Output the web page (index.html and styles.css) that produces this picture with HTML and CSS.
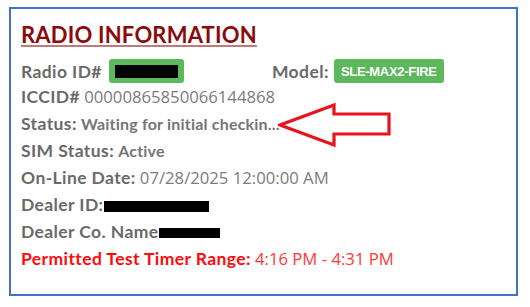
FILE: index.html
```html
<!DOCTYPE html>
<html>
<head>
<meta charset="utf-8">
<link rel="stylesheet" href="styles.css">
</head>
<body>
<div class="card">
  <h1 class="title">RADIO INFORMATION</h1>
  <div class="row row-first">
    <span class="label">Radio ID#</span>
    <span class="badge-id"><span class="redact redact-id"></span></span>
    <span class="label model-label">Model:</span>
    <span class="badge-model">SLE-MAX2-FIRE</span>
  </div>
  <div class="row"><span class="label">ICCID#</span>&nbsp;<span class="value">00000865850066144868</span></div>
  <div class="row"><span class="label">Status:</span>&nbsp;<span class="value-small">Waiting for initial checkin...</span></div>
  <div class="row"><span class="label">SIM Status:</span>&nbsp;<span class="value-small">Active</span></div>
  <div class="row"><span class="label">On-Line Date:</span>&nbsp;<span class="value">07/28/2025 12:00:00 AM</span></div>
  <div class="row"><span class="label">Dealer ID:</span><span class="redact redact-dealer"></span></div>
  <div class="row"><span class="label">Dealer Co. Name</span><span class="redact redact-name"></span></div>
  <div class="row"><span class="label red-label">Permitted Test Timer Range:</span>&nbsp;<span class="value red-value">4:16 PM - 4:31 PM</span></div>
  <svg class="arrow" width="116" height="46" viewBox="0 0 116 46">
    <path d="M2 22 L56 2 L56 11 L111 11 L111 31 L56 31 L56 42 Z" fill="#fff" stroke="#e8131c" stroke-width="3.2" stroke-linejoin="miter"/>
  </svg>
</div>
</body>
</html>
```
FILE: styles.css
```css
* { box-sizing: border-box; }
body {
  margin: 0;
  background: #fff;
  width: 530px;
  height: 307px;
  overflow: hidden;
}
.card {
  position: relative;
  margin: 7px 0 0 9px;
  width: 509px;
  height: 289px;
  border: 2px solid #4472c4;
  padding: 14px 0 0 10px;
  font-family: Lato, "Liberation Sans", sans-serif;
}
.title {
  margin: 0;
  font-family: Lato, sans-serif;
  font-weight: 700;
  font-size: 22px;
  line-height: 24px;
  color: #8b0a0a;
  text-decoration: underline;
  text-decoration-color: #c07a7a;
  text-decoration-thickness: 2px;
  text-underline-offset: 2px;
  letter-spacing: 0.2px;
}
.row {
  display: flex;
  align-items: center;
  height: 27px;
  white-space: nowrap;
}
.row-first {
  margin-top: 12px;
  height: 24px;
}
.label {
  font-family: Lato, sans-serif;
  font-weight: 700;
  font-size: 17.5px;
  letter-spacing: 0.4px;
  color: #6a6a6a;
}
.value {
  font-family: "Open Sans", sans-serif;
  font-size: 16.7px;
  color: #7c7c7c;
}
.value-small {
  font-family: Lato, sans-serif;
  font-weight: 700;
  font-size: 16px;
  letter-spacing: 0.2px;
  color: #757575;
}
.badge-id {
  display: flex;
  align-items: center;
  justify-content: center;
  margin-left: 7px;
  width: 75px;
  height: 24px;
  background: #5cb85c;
  border-radius: 3px;
}
.redact { display: inline-block; background: #000; }
.redact-id { width: 63px; height: 13px; }
.redact-dealer { width: 105px; height: 11px; margin-top: 4px; }
.redact-name { width: 61px; height: 10px; margin-top: 3px; }
.model-label { margin-left: 88px; }
.badge-model {
  display: flex;
  align-items: center;
  justify-content: center;
  margin-left: 5px;
  width: 110px;
  height: 24px;
  background: #5cb85c;
  border-radius: 3px;
  color: #fff;
  font-family: "Liberation Sans Narrow", "Liberation Sans", sans-serif;
  font-weight: 700;
  font-size: 13px;
  letter-spacing: -0.3px;
}
.red-label { color: #ff0a0a; }
.red-value { color: #ff3838; }
.arrow {
  position: absolute;
  left: 267px;
  top: 94px;
}
```
